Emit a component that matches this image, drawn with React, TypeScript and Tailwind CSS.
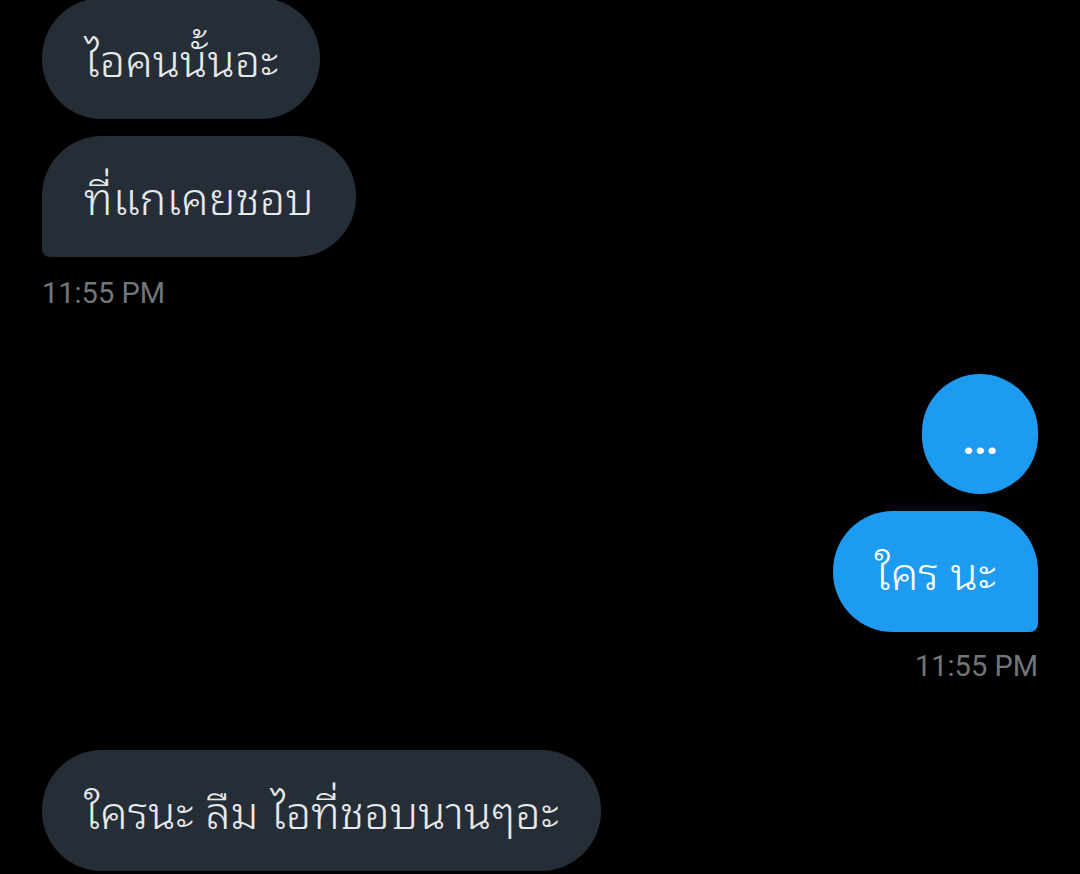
const thai = { fontFamily: '"Noto Sans Thai Looped", "Noto Serif Thai", Loma, Garuda, "Noto Sans Thai", "Noto Sans", sans-serif' };

function Bubble({ text, mine = false, tail = false }: { text: string; mine?: boolean; tail?: boolean }) {
  const base = 'h-[121px] px-[42px] flex items-center text-[45px] font-light leading-none rounded-[60px]';
  const color = mine ? 'bg-[#1d9bf0] text-white self-end' : 'bg-[#252e36] text-[#e7e9ea] self-start';
  const corner = tail ? (mine ? 'rounded-br-[8px]' : 'rounded-bl-[8px]') : '';
  return (
    <div className={`${base} ${color} ${corner}`}>
      <span className="-mt-[2px]">{text}</span>
    </div>
  );
}

function Time({ right = false }: { right?: boolean }) {
  return (
    <div
      className={`text-[29px] leading-none text-[#71767b] ${right ? 'self-end' : 'self-start'}`}
      style={{ fontFamily: 'Roboto, "Liberation Sans", sans-serif' }}
    >
      11:55 PM
    </div>
  );
}

export default function App() {
  return (
    <div className="w-[1080px] h-[874px] bg-black overflow-hidden">
      <div className="flex flex-col px-[42px] -mt-[2px]" style={thai}>
        <Bubble text="ไอคนนั้นอะ" />
        <div className="mt-[17px] flex flex-col">
          <Bubble text="ที่แกเคยชอบ" tail />
        </div>
        <div className="mt-[22px] flex flex-col">
          <Time />
        </div>

        <div className="mt-[66px] self-end w-[116px] h-[120px] rounded-full bg-[#1d9bf0] flex items-center justify-center">
          <span
            className="text-white text-[44px] font-bold leading-none tracking-[-1px] mt-[10px]"
            style={{ fontFamily: 'Roboto, "Liberation Sans", sans-serif' }}
          >
            ...
          </span>
        </div>
        <div className="mt-[17px] flex flex-col">
          <Bubble text="ใคร นะ" mine tail />
        </div>
        <div className="mt-[20px] flex flex-col">
          <Time right />
        </div>

        <div className="mt-[69px] flex flex-col">
          <Bubble text="ใครนะ ลืม ไอที่ชอบนานๆอะ" />
        </div>
      </div>
    </div>
  );
}
